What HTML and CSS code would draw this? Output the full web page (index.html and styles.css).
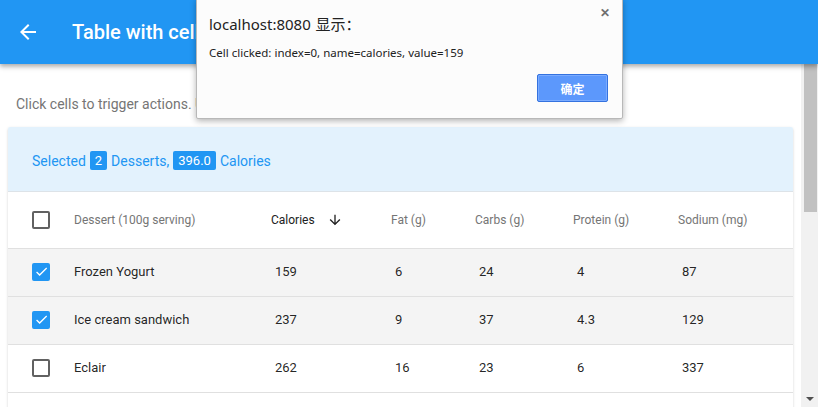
FILE: index.html
```html
<!DOCTYPE html>
<html lang="en">
<head>
<meta charset="utf-8">
<title>Table with cell actions</title>
<link rel="stylesheet" href="styles.css">
</head>
<body>
<div class="app">
  <header class="appbar">
    <svg class="back" viewBox="0 0 24 24" width="24" height="24"><path fill="#fff" d="M20 11H7.83l5.59-5.59L12 4l-8 8 8 8 1.41-1.41L7.83 13H20v-2z"/></svg>
    <h1 class="title">Table with cell actions</h1>
  </header>
  <div class="main">
    <div class="content">
      <p class="hint">Click cells to trigger actions. Use the checkboxes to select rows.</p>
      <div class="card">
        <div class="card-head">
          <span>Selected</span><span class="badge">2</span><span>Desserts,</span><span class="badge">396.0</span><span>Calories</span>
        </div>
        <div class="row head">
          <div class="cell"><span class="cb"></span></div>
          <div class="cell">Dessert (100g serving)</div>
          <div class="cell sorted">Calories <svg class="sort" viewBox="0 0 24 24" width="16" height="16"><path fill="#212121" d="M20 12l-1.41-1.41L13 16.17V4h-2v12.17l-5.58-5.59L4 12l8 8 8-8z"/></svg></div>
          <div class="cell">Fat (g)</div>
          <div class="cell">Carbs (g)</div>
          <div class="cell">Protein (g)</div>
          <div class="cell">Sodium (mg)</div>
        </div>
        <div class="row selected">
          <div class="cell"><span class="cb on"><svg viewBox="0 0 24 24" width="18" height="18"><path fill="#fff" d="M9 16.17L4.83 12l-1.42 1.41L9 19 21 7l-1.41-1.41z"/></svg></span></div>
          <div class="cell">Frozen Yogurt</div>
          <div class="cell num">159</div>
          <div class="cell num">6</div>
          <div class="cell num">24</div>
          <div class="cell num">4</div>
          <div class="cell num">87</div>
        </div>
        <div class="row selected">
          <div class="cell"><span class="cb on"><svg viewBox="0 0 24 24" width="18" height="18"><path fill="#fff" d="M9 16.17L4.83 12l-1.42 1.41L9 19 21 7l-1.41-1.41z"/></svg></span></div>
          <div class="cell">Ice cream sandwich</div>
          <div class="cell num">237</div>
          <div class="cell num">9</div>
          <div class="cell num">37</div>
          <div class="cell num">4.3</div>
          <div class="cell num">129</div>
        </div>
        <div class="row">
          <div class="cell"><span class="cb"></span></div>
          <div class="cell">Eclair</div>
          <div class="cell num">262</div>
          <div class="cell num">16</div>
          <div class="cell num">23</div>
          <div class="cell num">6</div>
          <div class="cell num">337</div>
        </div>
      </div>
    </div>
    <div class="scrollbar">
      <div class="thumb"></div>
      <div class="track"></div>
      <div class="down"></div>
    </div>
  </div>
</div>

<div class="dialog">
  <div class="close">✕</div>
  <div class="d-title">localhost:8080 显示：</div>
  <div class="d-msg">Cell clicked: index=0, name=calories, value=159</div>
  <div class="d-actions"><button class="d-ok">确定</button></div>
</div>
</body>
</html>
```

FILE: styles.css
```css
* { box-sizing: border-box; }
html, body { margin: 0; height: 100%; }
body {
  font-family: Roboto, "Liberation Sans", Arial, sans-serif;
  overflow: hidden;
  background: #fff;
}
.app {
  display: flex;
  flex-direction: column;
  height: 407px;
}
.appbar {
  height: 64px;
  flex: none;
  background: #2196f3;
  display: flex;
  align-items: center;
  padding: 0 16px;
  box-shadow: 0 2px 4px rgba(0,0,0,.25), 0 4px 5px rgba(0,0,0,.1);
  position: relative;
  z-index: 2;
}
.back { display: block; }
.title {
  margin: 0 0 0 32px;
  color: #fff;
  font-size: 20px;
  font-weight: 500;
  white-space: nowrap;
}
.main {
  flex: 1;
  display: flex;
  min-height: 0;
}
.content {
  flex: 1;
  padding: 0 8px;
  overflow: hidden;
}
.hint {
  margin: 30px 8px 13px;
  font-size: 14px;
  line-height: 20px;
  color: #757575;
  white-space: nowrap;
}
.card {
  background: #fff;
  border-radius: 2px;
  box-shadow: 0 1px 3px rgba(0,0,0,.15), 0 1px 1px rgba(0,0,0,.08);
  overflow: hidden;
  padding-bottom: 56px;
}
.card-head {
  height: 65px;
  background: #e3f2fd;
  border-bottom: 1px solid #dde3e8;
  display: flex;
  align-items: center;
  gap: 4px;
  padding: 3px 24px 0;
  font-size: 14px;
  color: #2196f3;
}
.badge {
  background: #2196f3;
  color: #fff;
  font-size: 13px;
  line-height: 19px;
  padding: 0 5px;
  border-radius: 2px;
}
.row {
  display: grid;
  grid-template-columns: 66px 197px 120px 84px 98px 105px 1fr;
  height: 48px;
  border-bottom: 1px solid #e0e0e0;
  align-items: center;
  font-size: 13px;
  color: rgba(0,0,0,.87);
}
.row.head {
  height: 57px;
  font-size: 12px;
  color: #757575;
}
.row.selected { background: #f4f4f4; }
.cell {
  display: flex;
  align-items: center;
  white-space: nowrap;
}
.row:not(.head) .cell { padding-bottom: 2px; }
.cell:first-child { padding-left: 24px; }
.cell.num { padding-left: 4px; }
.cell.sorted { color: #212121; }
.sort { margin-left: 12px; }
.cb {
  width: 18px;
  height: 18px;
  border: 2px solid #616161;
  border-radius: 2px;
  display: flex;
  align-items: center;
  justify-content: center;
}
.cb.on {
  background: #2196f3;
  border-color: #2196f3;
}
.cb.on svg { flex: none; width: 15px; height: 15px; }
.scrollbar {
  width: 17px;
  flex: none;
  background: #f1f1f1;
  display: flex;
  flex-direction: column;
  align-items: center;
}
.thumb {
  width: 13px;
  height: 148px;
  margin-left: 1px;
  background: #c1c1c1;
}
.track { flex: 1; }
.down {
  width: 0;
  height: 0;
  border-left: 4px solid transparent;
  border-right: 4px solid transparent;
  border-top: 4px solid #505050;
  margin-bottom: 6px;
}
.dialog {
  position: absolute;
  left: 196px;
  top: -2px;
  width: 427px;
  height: 121px;
  background: #fcfcfc;
  border: 1px solid #b8b8b8;
  border-radius: 2px;
  box-shadow: 0 2px 6px rgba(0,0,0,.3);
  z-index: 5;
  font-family: "Noto Sans", "Noto Sans CJK SC", sans-serif;
  padding: 15px 12px 0 12px;
}
.close {
  position: absolute;
  right: 12px;
  top: 5px;
  font-size: 12px;
  font-weight: bold;
  color: #6f6f6f;
}
.d-title {
  font-size: 15px;
  line-height: 20px;
  color: #222;
  word-spacing: 1px;
}
.d-msg {
  margin-top: 9px;
  font-size: 11.5px;
  line-height: 20px;
  color: #222;
}
.d-actions {
  display: flex;
  justify-content: flex-end;
  margin-top: 11px;
  padding-right: 2px;
}
.d-ok {
  width: 71px;
  height: 28px;
  background: #5c98fc;
  border: 1px solid #3472df;
  box-shadow: inset 0 0 0 1px #7aabff;
  border-radius: 2px;
  color: #fff;
  font-family: "Noto Sans CJK SC", sans-serif;
  font-size: 12px;
  font-weight: bold;
  padding: 0;
}
```
